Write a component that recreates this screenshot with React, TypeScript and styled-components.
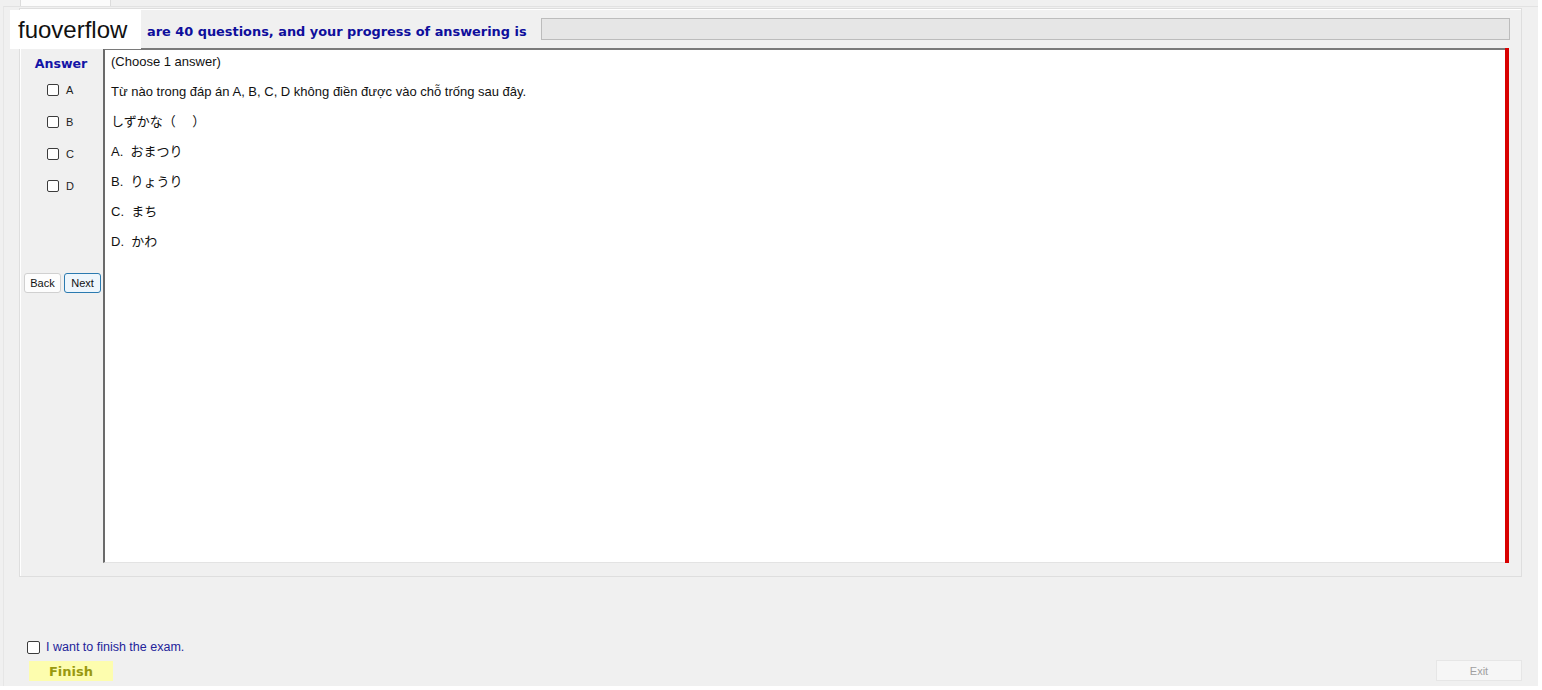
import styled, { createGlobalStyle } from "styled-components";

const GlobalStyle = createGlobalStyle`
  html, body {
    margin: 0;
    padding: 0;
    background: #ffffff;
  }
  body {
    font-family: "Liberation Sans", Arial, sans-serif;
  }
`;

const Window = styled.div`
  position: relative;
  width: 1538px;
  height: 686px;
  background: #f0f0f0;
  display: flex;
  flex-direction: column;
`;

const TabStrip = styled.div`
  height: 6px;
  padding-left: 20px;
  display: flex;
`;

const Tab = styled.div`
  width: 89px;
  background: #fbfbfb;
  border-left: 1px solid #dcdcdc;
  border-right: 1px solid #dcdcdc;
`;

const TabPage = styled.div`
  flex: 1;
  margin-left: 3px;
  border-top: 1px solid #e2e2e2;
  border-left: 1px solid #e6e6e6;
  display: flex;
  flex-direction: column;
`;

const GroupBox = styled.div`
  margin: 1px 16px 0 15px;
  height: 569px;
  box-sizing: border-box;
  border: 1px solid #dedede;
  box-shadow: inset 1px 1px 0 #ffffff;
  padding: 9px 11px 13px 1px;
  display: flex;
  flex-direction: column;
  gap: 8px;
`;

const Header = styled.div`
  display: flex;
  align-items: flex-end;
  height: 22px;
  padding-left: 126px;
`;

const BoldText = styled.div`
  font-family: "DejaVu Sans", Verdana, sans-serif;
  font-size: 12.6px;
  font-weight: bold;
  color: #0e0e9c;
  white-space: nowrap;
`;

const HeaderText = styled(BoldText)`
  font-size: 12.9px;
  line-height: 15px;
  padding-bottom: 1px;
`;

const Progress = styled.div`
  margin-left: auto;
  width: 967px;
  height: 20px;
  background: #e6e6e6;
  border: 1px solid #bcbcbc;
`;

const Main = styled.div`
  flex: 1;
  display: flex;
  margin-right: 1px;
`;

const Sidebar = styled.div`
  width: 82px;
  display: flex;
  flex-direction: column;
  align-items: center;
`;

const AnswerTitle = styled(BoldText)`
  margin: 8px 2px 0 0;
  color: #1414a6;
  line-height: 16px;
`;

const OptionList = styled.div`
  align-self: flex-start;
  margin: 11px 0 0 26px;
  display: flex;
  flex-direction: column;
  gap: 18px;
`;

const Option = styled.label`
  display: flex;
  align-items: center;
  gap: 7px;
  height: 14px;
  font-size: 11px;
  color: #222;
`;

const Box = styled.span<{ $size?: number }>`
  display: inline-block;
  width: ${(p) => p.$size ?? 12}px;
  height: ${(p) => p.$size ?? 12}px;
  box-sizing: border-box;
  border: 1px solid #3c3c3c;
  border-radius: 2px;
  background: #ffffff;
`;

const NavRow = styled.div`
  margin-top: 80px;
  display: flex;
  gap: 3px;
  align-self: flex-start;
  padding-left: 3px;
`;

const NavButton = styled.button<{ $focused?: boolean }>`
  width: 37px;
  height: 20px;
  padding: 0;
  font-family: "Liberation Sans", Arial, sans-serif;
  font-size: 11px;
  color: #111;
  border-radius: 3px;
  background: ${(p) => (p.$focused ? "#eef6fc" : "#fdfdfd")};
  border: 1px solid ${(p) => (p.$focused ? "#2a7ab0" : "#d0d0d0")};
`;

const Content = styled.div`
  flex: 1;
  background: #ffffff;
  border-left: 2px solid #6a6a6a;
  border-top: 2px solid #7a7a7a;
  border-bottom: 1px solid #e3e3e3;
  padding: 3px 0 0 6px;
  display: flex;
  flex-direction: column;
  gap: 12px;
`;

const Line = styled.div`
  font-size: 13px;
  line-height: 18px;
  color: #111;
  white-space: pre;
  font-family: "Liberation Sans", Arial, "Noto Sans CJK JP", sans-serif;
`;

const RedBar = styled.div`
  width: 4px;
  background: #d80000;
`;

const Footer = styled.div`
  flex: 1;
  display: flex;
  align-items: flex-end;
  justify-content: space-between;
  padding: 0 16px 5px 23px;
`;

const FinishArea = styled.div`
  display: flex;
  flex-direction: column;
  gap: 7px;
`;

const FinishCheck = styled.label`
  display: flex;
  align-items: center;
  gap: 6px;
  font-size: 12.5px;
  color: #23239a;
  line-height: 14px;
`;

const FinishButton = styled.button`
  margin-left: 2px;
  width: 84px;
  height: 20px;
  padding: 0;
  border: none;
  background: #fdfdae;
  color: #999910;
  font-family: "DejaVu Sans", Verdana, sans-serif;
  font-size: 13px;
  font-weight: bold;
`;

const ExitButton = styled.button`
  width: 86px;
  height: 21px;
  padding: 0;
  background: #f6f6f6;
  border: 1px solid #e6e6e6;
  color: #a0a0a0;
  font-family: "Liberation Sans", Arial, sans-serif;
  font-size: 11px;
`;

const Watermark = styled.div`
  position: absolute;
  left: 10px;
  top: 10px;
  width: 131px;
  height: 39px;
  background: #ffffff;
  box-sizing: border-box;
  padding: 6px 0 0 8px;
  font-size: 24px;
  line-height: 28px;
  color: #111;
`;

const lines = [
  "(Choose 1 answer)",
  "Từ nào trong đáp án A, B, C, D không điền được vào chỗ trống sau đây.",
  "しずかな（　 ）",
  "A.  おまつり",
  "B.  りょうり",
  "C.  まち",
  "D.  かわ",
];

export default function App() {
  return (
    <>
      <GlobalStyle />
      <Window>
        <TabStrip>
          <Tab />
        </TabStrip>
        <TabPage>
          <GroupBox>
            <Header>
              <HeaderText>are 40 questions, and your progress of answering is</HeaderText>
              <Progress />
            </Header>
            <Main>
              <Sidebar>
                <AnswerTitle>Answer</AnswerTitle>
                <OptionList>
                  {["A", "B", "C", "D"].map((k) => (
                    <Option key={k}>
                      <Box />
                      {k}
                    </Option>
                  ))}
                </OptionList>
                <NavRow>
                  <NavButton>Back</NavButton>
                  <NavButton $focused>Next</NavButton>
                </NavRow>
              </Sidebar>
              <Content>
                {lines.map((l) => (
                  <Line key={l}>{l}</Line>
                ))}
              </Content>
              <RedBar />
            </Main>
          </GroupBox>
          <Footer>
            <FinishArea>
              <FinishCheck>
                <Box $size={13} />I want to finish the exam.
              </FinishCheck>
              <FinishButton>Finish</FinishButton>
            </FinishArea>
            <ExitButton>Exit</ExitButton>
          </Footer>
        </TabPage>
        <Watermark>fuoverflow</Watermark>
      </Window>
    </>
  );
}
